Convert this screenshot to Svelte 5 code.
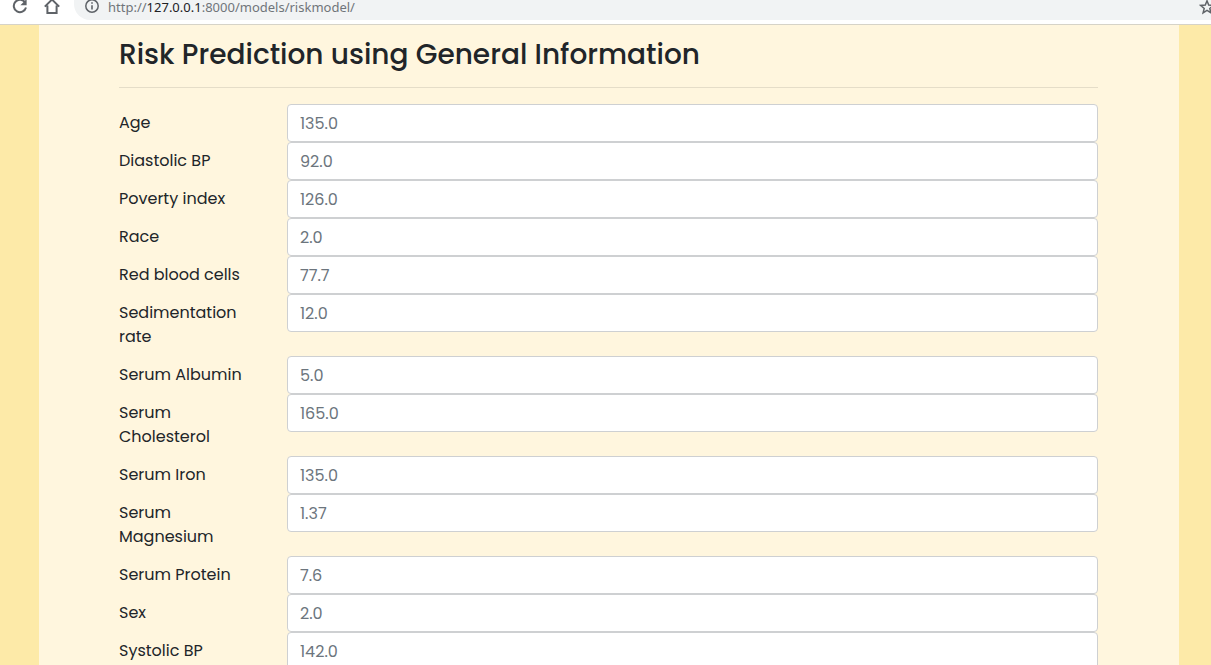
<script>
  const fields = [
    { id: 'age', label: 'Age', hint: '135.0' },
    { id: 'diastolic', label: 'Diastolic BP', hint: '92.0' },
    { id: 'poverty', label: 'Poverty index', hint: '126.0' },
    { id: 'race', label: 'Race', hint: '2.0' },
    { id: 'rbc', label: 'Red blood cells', hint: '77.7' },
    { id: 'sedimentation', label: 'Sedimentation rate', hint: '12.0' },
    { id: 'albumin', label: 'Serum Albumin', hint: '5.0' },
    { id: 'cholesterol', label: 'Serum Cholesterol', hint: '165.0' },
    { id: 'iron', label: 'Serum Iron', hint: '135.0' },
    { id: 'magnesium', label: 'Serum Magnesium', hint: '1.37' },
    { id: 'protein', label: 'Serum Protein', hint: '7.6' },
    { id: 'sex', label: 'Sex', hint: '2.0' },
    { id: 'systolic', label: 'Systolic BP', hint: '142.0' }
  ];
</script>

<div class="window">
  <header class="toolbar">
    <button class="tool" aria-label="Reload">
      <svg width="16" height="16" viewBox="0 0 16 16" fill="none" stroke="#5f6368" stroke-width="2">
        <path d="M13.2 4.6A6.2 6.2 0 1 0 14 9.6" />
        <path d="M14.6 1v6.2H8.4z" fill="#5f6368" stroke="none" />
      </svg>
    </button>
    <button class="tool" aria-label="Home">
      <svg width="16" height="16" viewBox="0 0 16 16" fill="none" stroke="#5f6368" stroke-width="2">
        <path d="M.8 8.6 8 1.6l7.2 7M3.4 7.4V15h9.2V7.4" />
      </svg>
    </button>
    <div class="address">
      <svg width="14" height="14" viewBox="0 0 14 14" fill="none" stroke="#5f6368">
        <circle cx="7" cy="7" r="6.2" stroke-width="1.5" />
        <path d="M7 6.2v4.4M7 3.2v1.6" stroke-width="1.6" />
      </svg>
      <span class="url">http://<b>127.0.0.1</b>:8000/models/riskmodel/</span>
      <button class="star" aria-label="Bookmark this page">
        <svg width="16" height="16" viewBox="0 0 16 16" fill="none" stroke="#5f6368" stroke-width="1.5">
          <path d="m8 1.8 1.7 4.3 4.6.3-3.5 3 1.1 4.4L8 11.4l-3.9 2.4 1.1-4.4-3.5-3 4.6-.3z" />
        </svg>
      </button>
    </div>
  </header>

  <main>
    <form class="panel">
      <h1>Risk Prediction using General Information</h1>
      {#each fields as field (field.id)}
        <div class="row">
          <label for={field.id}>{field.label}</label>
          <input id={field.id} type="text" placeholder={field.hint} />
        </div>
      {/each}
    </form>
  </main>
</div>

<style>
  .window {
    display: flex;
    flex-direction: column;
    height: 100vh;
    overflow: hidden;
    font-family: Poppins, Inter, sans-serif;
    color: #212529;
  }
  .window * {
    box-sizing: border-box;
  }
  .toolbar {
    display: flex;
    flex: none;
    align-items: flex-start;
    gap: 16px;
    height: 25px;
    padding-left: 12px;
    background: #fff;
    border-bottom: 1px solid #d6d3c8;
  }
  button {
    display: block;
    padding: 0;
    border: 0;
    background: none;
  }
  svg {
    display: block;
    flex: none;
  }
  .tool {
    margin-top: -2px;
  }
  .address {
    display: flex;
    flex: 1;
    align-items: flex-start;
    gap: 9px;
    height: 20px;
    margin-left: -2px;
    padding-left: 11px;
    background: #f1f3f4;
    border-bottom-left-radius: 16px;
  }
  .address > svg {
    margin-top: -1px;
  }
  .url {
    flex: 1;
    font: 13px/14px "Noto Sans", "Open Sans", sans-serif;
    color: #70757a;
  }
  .url b {
    font-weight: 400;
    color: #202124;
  }
  .star {
    margin: -1px -4px 0 0;
  }
  main {
    flex: 1;
    min-height: 0;
    padding: 0 32px 0 39px;
    background: #fdeaa8;
  }
  .panel {
    min-height: 100%;
    padding: 13px 81px 0 80px;
    background: #fff6de;
  }
  h1 {
    margin: 0 0 16px;
    padding-bottom: 15px;
    border-bottom: 1px solid #e5ddc8;
    font-size: 28px;
    font-weight: 500;
    line-height: 34px;
  }
  .row {
    display: grid;
    grid-template-columns: 168px 1fr;
    align-items: start;
  }
  label {
    padding: 7px 42px 7px 0;
    font-size: 16px;
    line-height: 24px;
  }
  input {
    width: 100%;
    height: 38px;
    padding: 6px 12px;
    border: 1px solid #ced0d2;
    border-radius: 4px;
    background: #fff;
    font: inherit;
    font-size: 16px;
    line-height: 24px;
    color: #495057;
  }
  input::placeholder {
    color: #6c757d;
    opacity: 1;
  }
</style>
